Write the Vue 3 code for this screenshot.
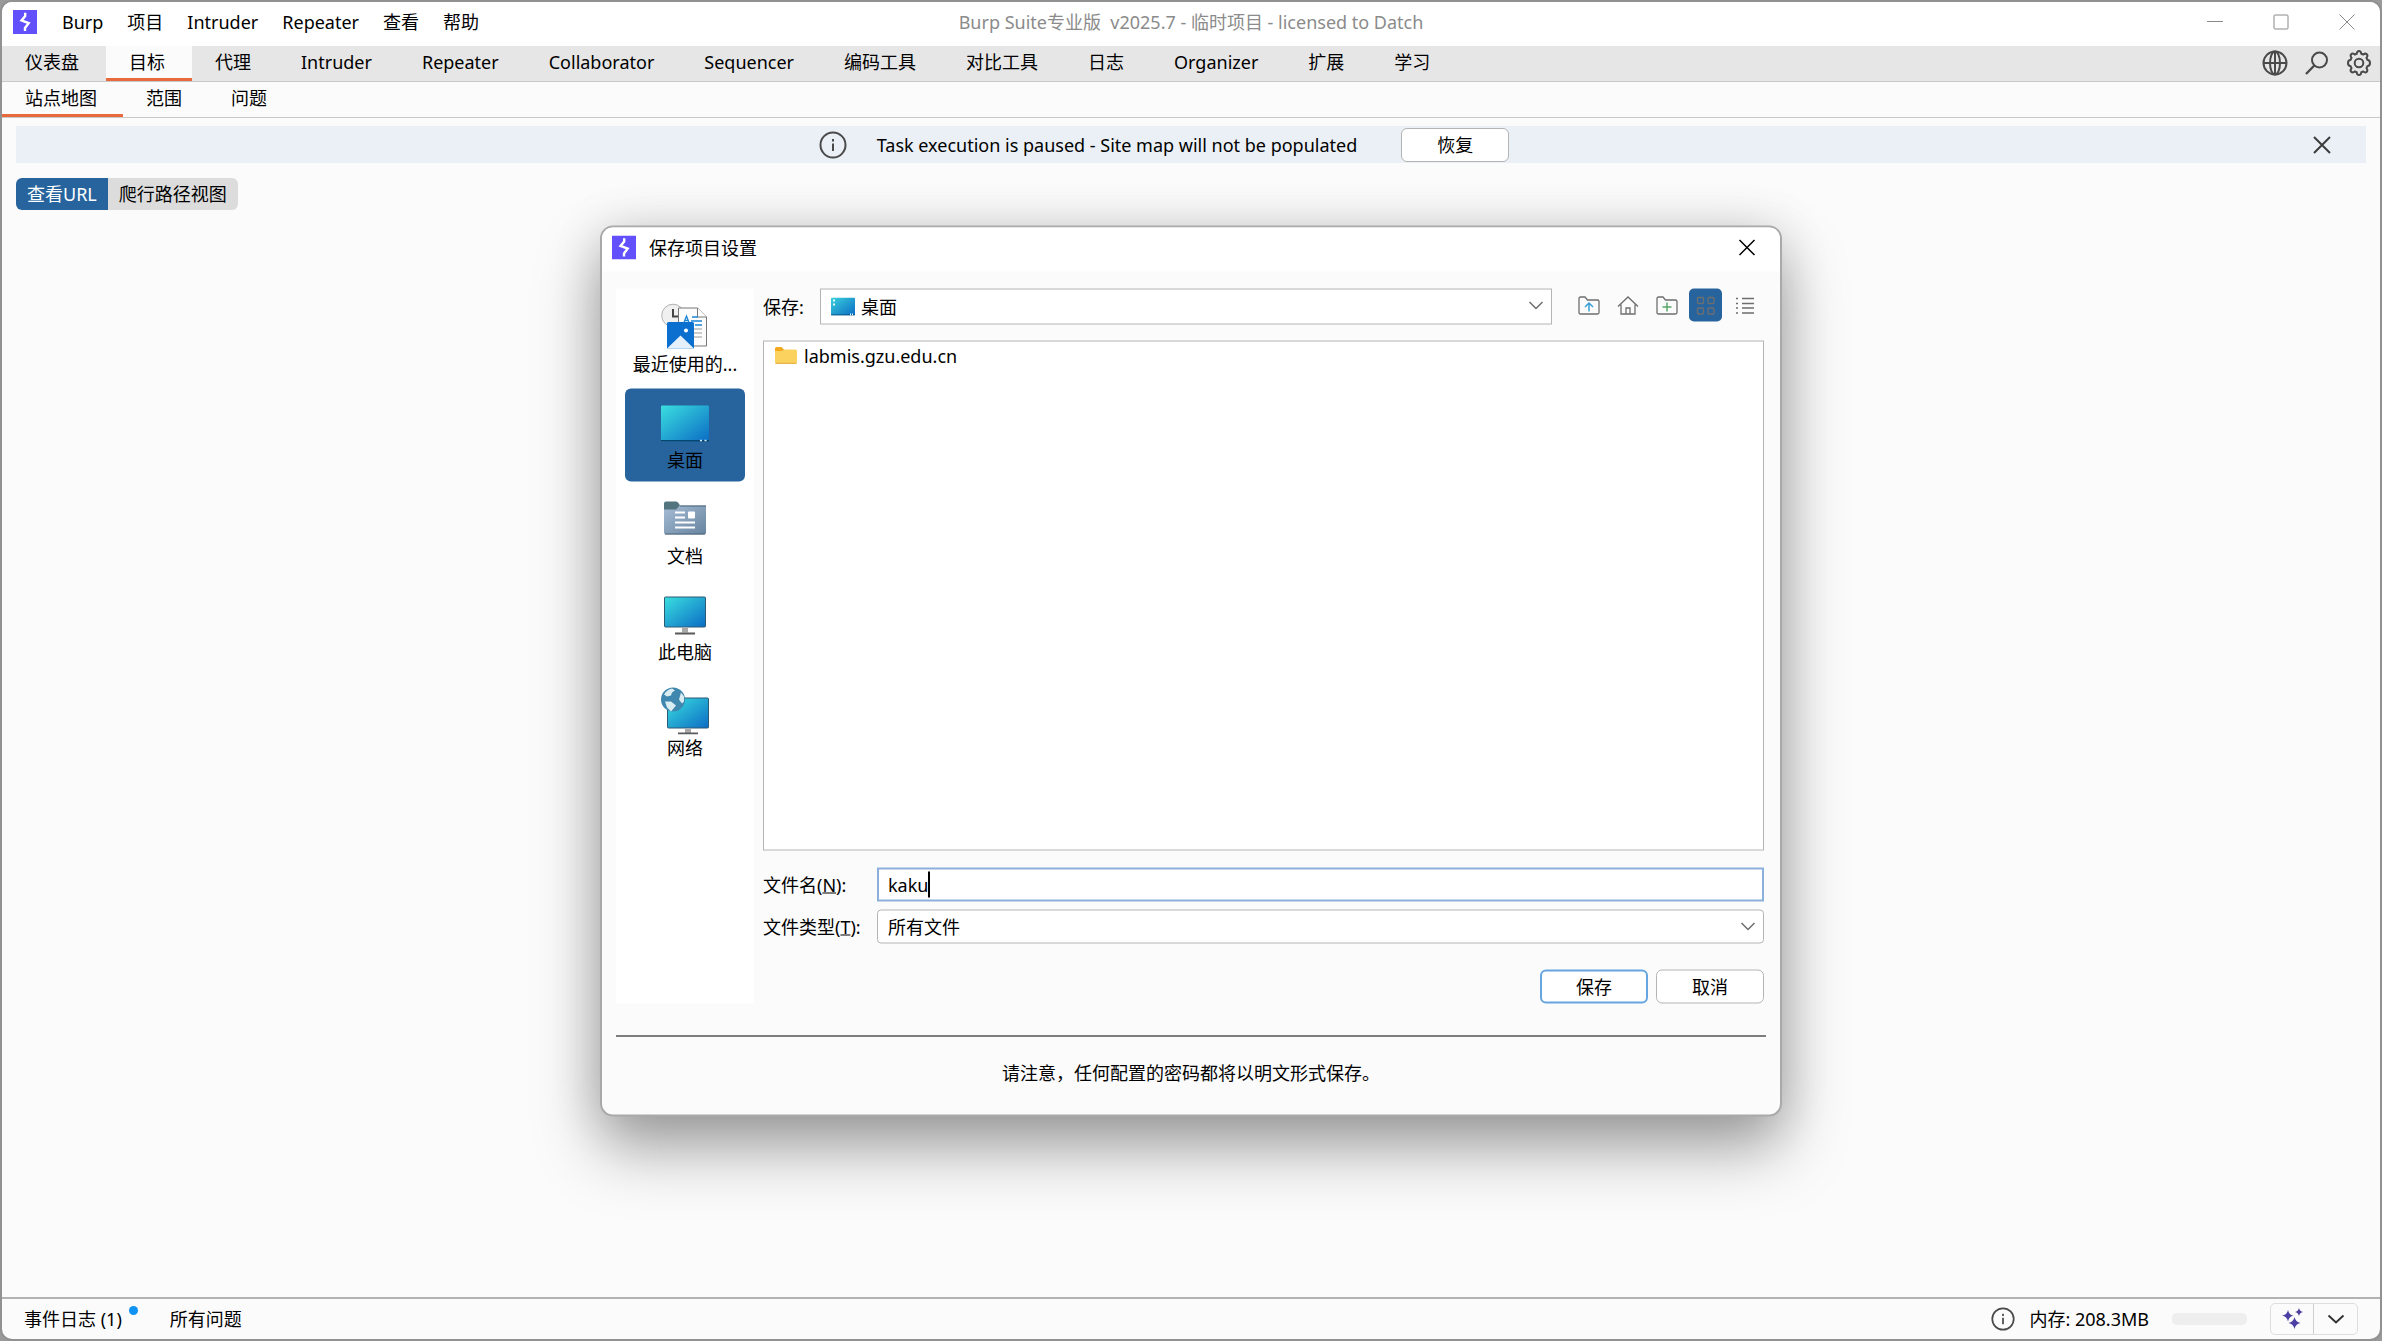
<script setup>
import { ref } from 'vue'

const menus = ['Burp', '项目', 'Intruder', 'Repeater', '查看', '帮助']
const tabs = ['仪表盘', '目标', '代理', 'Intruder', 'Repeater', 'Collaborator', 'Sequencer', '编码工具', '对比工具', '日志', 'Organizer', '扩展', '学习']
const activeTab = ref('目标')
const subTabs = ['站点地图', '范围', '问题']
const activeSubTab = ref('站点地图')
const places = [
  { id: 'recent', label: '最近使用的...' },
  { id: 'desktop', label: '桌面' },
  { id: 'documents', label: '文档' },
  { id: 'computer', label: '此电脑' },
  { id: 'network', label: '网络' },
]
const place = ref('desktop')
const files = ['labmis.gzu.edu.cn']
const fileName = ref('kaku')
</script>

<template>
  <div class="desktop">
    <div class="window">
      <header class="titlebar">
        <div class="side">
          <svg class="logo" viewBox="0 0 24 24" aria-hidden="true">
            <rect width="24" height="24" fill="#6150fb" />
            <path d="M12.200 2.800V6L8.500 10.500l7.200 2.600L12 18v3" fill="none" stroke="#fff" stroke-width="2.400" />
          </svg>
          <nav class="menus">
            <button v-for="m in menus" :key="m" type="button">{{ m }}</button>
          </nav>
        </div>
        <h1 class="title">Burp Suite专业版&nbsp; v2025.7 - 临时项目 - licensed to Datch</h1>
        <div class="side controls">
          <button type="button" aria-label="最小化"><svg viewBox="0 0 16 16"><path d="M0 7.500h16" /></svg></button>
          <button type="button" aria-label="最大化"><svg viewBox="0 0 16 16"><rect x="1" y="1" width="14" height="14" rx="1" /></svg></button>
          <button type="button" aria-label="关闭"><svg viewBox="0 0 16 16"><path d="M.5.5l15 15M15.500.5l-15 15" /></svg></button>
        </div>
      </header>

      <div class="tabbar main">
        <button v-for="t in tabs" :key="t" type="button" :class="{ active: t === activeTab }" @click="activeTab = t">{{ t }}</button>
        <div class="tools">
          <button type="button" aria-label="浏览器">
            <svg viewBox="0 0 26 26"><circle cx="13" cy="13" r="11.500" /><ellipse cx="13" cy="13" rx="5" ry="11.500" /><path d="M1.500 13h23M13 1.500v23" /></svg>
          </button>
          <button type="button" aria-label="搜索">
            <svg viewBox="0 0 26 26"><circle cx="15.500" cy="10" r="7.500" /><path d="M10.300 15.500L2 24" stroke-width="2.400" /></svg>
          </button>
          <button type="button" aria-label="设置">
            <svg viewBox="0 0 26 26"><path d="M10.700 3.700q.4-2.700 2.300-2.700t2.300 2.700l1.900.8q2.200-1.600 3.600-.3t-.3 3.600l.8 1.900q2.700.4 2.700 3.300t-2.700 3.300l-.8 1.900q1.600 2.200.3 3.600t-3.600-.3l-1.900.8q-.4 2.700-2.300 2.700t-2.300-2.700l-1.900-.8q-2.200 1.600-3.600.3t.3-3.600l-.8-1.900q-2.700-.4-2.700-3.300t2.700-3.300l.8-1.900q-1.600-2.200-.3-3.600t3.600.3z" /><circle cx="13" cy="13" r="4.300" /></svg>
          </button>
        </div>
      </div>

      <div class="tabbar sub">
        <button v-for="t in subTabs" :key="t" type="button" :class="{ active: t === activeSubTab }" @click="activeSubTab = t">{{ t }}</button>
      </div>

      <main class="content">
        <div class="banner">
          <div class="notice">
            <svg class="info" viewBox="0 0 28 28" aria-hidden="true"><circle cx="14" cy="14" r="12.500" /><path d="M14 12.500v7.500M14 8v2.500" /></svg>
            <span>Task execution is paused - Site map will not be populated</span>
            <button type="button" class="btn">恢复</button>
          </div>
          <button type="button" class="dismiss" aria-label="关闭提示"><svg viewBox="0 0 20 20"><path d="M2 2l16 16M18 2L2 18" /></svg></button>
        </div>
        <div class="views">
          <button type="button" class="on">查看URL</button>
          <button type="button">爬行路径视图</button>
        </div>
      </main>

      <footer class="status">
        <button type="button" class="log">事件日志 (1)<i class="dot"></i></button>
        <button type="button">所有问题</button>
        <div class="memory">
          <svg class="info" viewBox="0 0 28 28" aria-hidden="true"><circle cx="14" cy="14" r="12.500" /><path d="M14 12.500v7.500M14 8v2.500" /></svg>
          <span>内存: 208.3MB</span>
          <div class="meter"></div>
          <div class="split">
            <button type="button" aria-label="AI">
              <svg viewBox="0 0 24 24"><path d="M8 3q1 5 5.500 5.500Q9 9.500 8 14.500 7 9.500 2 8.500 7 8 8 3zM19 1q.8 3.400 4 4-3.200.6-4 4-.8-3.400-4-4 3.200-.6 4-4zM14.500 10q1 5 6 6-5 1-6 6-1-5-6-6 5-1 6-6z" fill="#4b3fa3" /></svg>
            </button>
            <button type="button" aria-label="展开"><svg viewBox="0 0 24 24"><path d="M4.500 8.500l7.500 7 7.500-7" fill="none" stroke="#333" stroke-width="2" /></svg></button>
          </div>
        </div>
      </footer>
    </div>

    <section class="dialog" role="dialog" aria-labelledby="dlg-title">
      <header class="dlg-head">
        <svg class="logo" viewBox="0 0 24 24" aria-hidden="true">
          <rect width="24" height="24" fill="#6150fb" />
          <path d="M12.200 2.800V6L8.500 10.500l7.200 2.600L12 18v3" fill="none" stroke="#fff" stroke-width="2.400" />
        </svg>
        <h2 id="dlg-title">保存项目设置</h2>
        <button type="button" aria-label="关闭"><svg viewBox="0 0 18 18"><path d="M1.500 1.500l15 15M16.500 1.500l-15 15" /></svg></button>
      </header>

      <div class="dlg-body">
        <nav class="places">
          <button v-for="p in places" :key="p.id" type="button" :class="{ on: p.id === place }" @click="place = p.id">
            <svg viewBox="0 0 48 48" aria-hidden="true">
              <defs>
                <linearGradient :id="'scr-' + p.id" x1="0" y1="0" x2="1" y2="1"><stop offset="0" stop-color="#3adfe0" /><stop offset="1" stop-color="#0b6cc4" /></linearGradient>
                <linearGradient :id="'aux-' + p.id" x1="0" y1="0" x2="1" y2="1"><stop offset="0" stop-color="#a6bdd5" /><stop offset="1" stop-color="#67839f" /></linearGradient>
              </defs>
              <template v-if="p.id === 'recent'">
                <circle cx="12" cy="13" r="11.300" fill="#f0f0f0" stroke="#b0b0b0" />
                <path d="M12 6.500v7.500h6" fill="none" stroke="#444" stroke-width="2" />
                <path d="M17.500 5.500h19l9 9v29h-28z" fill="#fcfcfc" stroke="#777" />
                <path d="M36.500 5.500v9h9" fill="#fff" stroke="#777" />
                <path d="M23 20l2.500-6.500 2.500 6.500M24 18h3M31 14.500h6M30 18.500h11M34 22.500h7" fill="none" stroke="#1a84d6" stroke-width="1.300" />
                <path d="M33 26.500h8M33 30.500h8M33 34.500h8" stroke="#999" />
                <path d="M6 21q0-1.500 1.500-1.500h24q1.500 0 1.500 1.500v25H6z" fill="#0a6fce" />
                <path d="M6 46l13.500-13L33 46z" fill="#e4f1fd" />
                <circle cx="25" cy="28" r="2" fill="#fff" />
              </template>
              <template v-else-if="p.id === 'desktop'">
                <rect y="7" width="48" height="36" rx="1" fill="url(#scr-desktop)" />
                <path d="M0 41.500h48v1.500H0z" fill="#08466f" />
                <path d="M39 42h2M43.500 42h2" stroke="#d9efff" stroke-width="1.500" />
              </template>
              <template v-else-if="p.id === 'documents'">
                <path d="M3 9q0-2 2-2h10q2 0 4 4l-3 5H3z" fill="#52757f" />
                <path d="M3 15h12l4-4h26v27q0 2-2 2H5q-2 0-2-2z" fill="url(#aux-documents)" />
                <path d="M19 11.500h26M4 39.500h40" stroke="#4b6479" />
                <path d="M14 18h10M14 23h10M14 28h20M14 33h20" stroke="#fff" stroke-width="2" />
                <rect x="27" y="17" width="7" height="7" rx="1" fill="#fff" />
              </template>
              <template v-else-if="p.id === 'computer'">
                <rect x="3.500" y="6.500" width="41" height="30" rx="1" fill="url(#scr-computer)" stroke="#2d5b72" />
                <path d="M21 37h6v5h-6z" fill="#a9a9a9" /><path d="M14 42h20v2H14z" fill="#595959" />
              </template>
              <template v-else>
                <rect x="6.500" y="11.500" width="41" height="30" rx="1" fill="url(#scr-network)" stroke="#2d5b72" />
                <path d="M24 42h6v5h-6z" fill="#a9a9a9" /><path d="M17 46h20v2H17z" fill="#595959" />
                <circle cx="12" cy="13" r="12" fill="#3f87ae" />
                <path d="M3 8q3-5 8-6l3 2-3 2-1 3-4 1zM4 15l6 0 5 4-5 6-4-4zM20 6l3 4v5l-2 2-3-4z" fill="#d8ecf2" />
              </template>
            </svg>
            <span>{{ p.label }}</span>
          </button>
        </nav>

        <form class="chooser" @submit.prevent>
          <div class="lookin">
            <label for="lookin">保存:</label>
            <div class="combo square">
              <svg class="combo-icon" viewBox="0 0 24 18" aria-hidden="true">
                <defs><linearGradient id="scr-small" x1="0" y1="0" x2="1" y2="1"><stop offset="0" stop-color="#3ad0dc" /><stop offset="1" stop-color="#0b6cc4" /></linearGradient></defs>
                <rect width="24" height="18" rx="1" fill="url(#scr-small)" /><path d="M0 17.500h24" stroke="#08466f" />
                <path d="M3 2v2M3 6v2M19 17h1M21 17h1" stroke="#e4fbff" stroke-width="2" />
              </svg>
              <select id="lookin" class="with-icon"><option>桌面</option></select>
              <svg class="chev" viewBox="0 0 16 10" aria-hidden="true"><path d="M1.500 1.500L8 8l6.500-6.500" /></svg>
            </div>
            <div class="nav-tools">
              <button type="button" aria-label="向上一级"><svg viewBox="0 0 24 24"><path d="M2 19V5q0-1.500 1.500-1.500H8l2.500 3h10Q22 6.500 22 8v11q0 1.500-1.500 1.500h-17Q2 20.500 2 19z" /><path d="M12 18V10M8 13.500l4-4 4 4" stroke="#389fd6" stroke-width="1.500" /></svg></button>
              <button type="button" aria-label="主目录"><svg viewBox="0 0 24 24"><path d="M2 13L12 3.500 22 13M5 11v9.500h14V11M10 20.500v-6h4v6" /></svg></button>
              <button type="button" aria-label="新建文件夹"><svg viewBox="0 0 24 24"><path d="M2 19V5q0-1.500 1.500-1.500H8l2.500 3h10Q22 6.500 22 8v11q0 1.500-1.500 1.500h-17Q2 20.500 2 19z" /><path d="M12 9v9M7.500 13.500h9" stroke="#59a869" stroke-width="1.500" /></svg></button>
              <button type="button" class="on" aria-label="列表视图"><svg viewBox="0 0 24 24"><rect x="3.500" y="4" width="6" height="6" rx="1" /><rect x="14" y="4" width="6" height="6" rx="1" /><rect x="3.500" y="14.500" width="6" height="6" rx="1" /><rect x="14" y="14.500" width="6" height="6" rx="1" /></svg></button>
              <button type="button" aria-label="详细信息"><svg viewBox="0 0 24 24"><path d="M3 5h2M9 5h12M3 10h2M9 10h12M3 14.500h2M9 14.500h12M3 19.500h2M9 19.500h12" /></svg></button>
            </div>
          </div>

          <ul class="files">
            <li v-for="f in files" :key="f">
              <svg viewBox="0 0 24 20" aria-hidden="true"><path d="M1 3q0-1.500 1.500-1.500h5L10 4l-2 3H1z" fill="#f3a81d" /><path d="M1 5.500h7L10 4h11.500Q23 4 23 5.500v11q0 1.500-1.500 1.500h-19Q1 18 1 16.500z" fill="#fcd25f" /><path d="M1.500 17.800h21" stroke="#e0a832" /></svg>
              <span>{{ f }}</span>
            </li>
          </ul>

          <div class="field">
            <label for="fname">文件名(<u>N</u>):</label>
            <div class="textbox"><input id="fname" v-model="fileName" type="text" spellcheck="false" autocomplete="off"><i class="caret"></i></div>
          </div>
          <div class="field">
            <label for="ftype">文件类型(<u>T</u>):</label>
            <div class="combo">
              <select id="ftype"><option>所有文件</option></select>
              <svg class="chev" viewBox="0 0 16 10" aria-hidden="true"><path d="M1.500 1.500L8 8l6.500-6.500" /></svg>
            </div>
          </div>
          <div class="actions">
            <button type="submit" class="btn primary">保存</button>
            <button type="button" class="btn">取消</button>
          </div>
        </form>
      </div>

      <p class="note">请注意，任何配置的密码都将以明文形式保存。</p>
    </section>
  </div>
</template>

<style>
body {
  margin: 0;
  background: #9a9a9a;
}
</style>

<style scoped>
.desktop {
  position: relative;
  display: flex;
  min-height: 100vh;
  font: 18px/26px "Noto Sans", "Noto Sans CJK SC", sans-serif;
  color: #000;
}
* {
  box-sizing: border-box;
}
button,
input,
select {
  margin: 0;
  padding: 0;
  border: 0;
  background: none;
  font: inherit;
  color: inherit;
}
svg {
  display: block;
  flex: none;
}
.window {
  flex: 1;
  min-width: 0;
  display: flex;
  flex-direction: column;
  border: 2px solid #919191;
  border-radius: 12px;
  overflow: hidden;
  background: #fbfbfb;
}
.logo {
  width: 24px;
  height: 24px;
}
.titlebar {
  display: flex;
  align-items: center;
  height: 44px;
  padding-bottom: 4px;
  background: #fff;
}
.side {
  flex: 1;
  display: flex;
  align-items: center;
  padding-left: 11px;
}
.menus {
  display: flex;
  padding-left: 13px;
}
.menus button {
  padding: 0 12px;
}
.title {
  margin: 0;
  font: inherit;
  color: #8b8b8b;
}
.controls {
  justify-content: flex-end;
}
.controls button {
  display: grid;
  place-items: center;
  width: 66px;
  height: 40px;
}
.controls svg {
  width: 16px;
  height: 16px;
  fill: none;
  stroke: #8a8a8a;
}
.tabbar {
  display: flex;
  height: 36px;
  border-bottom: 1px solid #c8c8c8;
}
.tabbar > button {
  padding: 0 27px 0 23px;
  border-bottom: 3px solid transparent;
}
.tabbar.sub > button {
  padding-right: 26px;
}
.tabbar > button.active {
  border-bottom-color: #e8693b;
  background: #fbfbfb;
}
.tabbar.main {
  background: #e6e6e6;
}
.tools {
  display: flex;
  align-items: center;
  gap: 16px;
  margin-left: auto;
  padding: 0 8px 2px 0;
}
.tools svg {
  width: 26px;
  height: 26px;
  fill: none;
  stroke: #4a4a4a;
  stroke-width: 2;
}
.content {
  flex: 1;
  display: flex;
  flex-direction: column;
  align-items: flex-start;
  gap: 15px;
  padding: 8px 14px;
}
.banner {
  display: flex;
  align-items: center;
  align-self: stretch;
  height: 37px;
  padding-right: 34px;
  background: #ebf0f6;
}
.notice {
  flex: 1;
  display: flex;
  align-items: center;
  justify-content: center;
  gap: 30px;
}
.notice .btn {
  margin-left: 14px;
}
.info {
  width: 28px;
  height: 28px;
  fill: none;
  stroke: #4a4a4a;
  stroke-width: 2;
}
.btn {
  width: 108px;
  height: 34px;
  border: 1px solid #b4b4b4;
  border-radius: 6px;
  background: #fff;
}
.btn.primary {
  border: 2px solid #66a5e0;
}
.dismiss svg {
  width: 20px;
  height: 20px;
  stroke: #3c3c3c;
  stroke-width: 2;
}
.views {
  display: flex;
  border-radius: 6px;
  overflow: hidden;
}
.views button {
  height: 32px;
  padding: 0 11px;
  background: #dcdcdc;
}
.views .on {
  background: #27649d;
  color: #fff;
}
.status {
  display: flex;
  align-items: center;
  height: 42px;
  padding: 0 22px;
  border-top: 2px solid #b2b2b2;
  gap: 32px;
}
.log {
  display: flex;
  gap: 7px;
}
.dot {
  width: 9px;
  height: 9px;
  border-radius: 50%;
  background: #0f93f5;
}
.memory {
  display: flex;
  align-items: center;
  gap: 14px;
  margin-left: auto;
}
.memory .info {
  width: 24px;
  height: 24px;
}
.meter {
  width: 75px;
  height: 12px;
  margin: 0 9px;
  border-radius: 5px;
  background: #eee;
}
.split {
  display: flex;
  border: 1px solid #dedede;
  border-radius: 5px;
}
.split button {
  display: grid;
  place-items: center;
  width: 43px;
  height: 30px;
}
.split button:first-child {
  border-right: 1px solid #cfcfcf;
}
.split svg {
  width: 24px;
  height: 24px;
}
.dialog {
  position: absolute;
  left: 50%;
  top: 50%;
  display: flex;
  flex-direction: column;
  width: 1182px;
  max-width: 96vw;
  translate: -50% -50%;
  border: 2px solid #a9a9a9;
  border-radius: 13px;
  background: #fbfbfb;
  box-shadow: 0 32px 64px rgba(0, 0, 0, 0.34), 0 4px 50px rgba(0, 0, 0, 0.14);
}
.dlg-head {
  display: flex;
  align-items: center;
  height: 44px;
  padding: 0 10px 4px;
  border-radius: 11px 11px 0 0;
  background: #fff;
}
.dlg-head h2 {
  margin: 0 auto 0 13px;
  font: inherit;
}
.dlg-head button {
  padding: 0 14px;
}
.dlg-head svg:not(.logo) {
  width: 18px;
  height: 18px;
  stroke: #000;
  stroke-width: 1.500;
}
.dlg-body {
  display: flex;
  gap: 9px;
  margin: 0 14px;
  padding: 17px 2px 32px 0;
  border-bottom: 1px solid #000;
}
.places {
  flex: none;
  display: flex;
  flex-direction: column;
  gap: 3px;
  width: 138px;
  padding: 4px 9px;
  background: #fff;
}
.places button {
  display: flex;
  flex-direction: column;
  align-items: center;
  height: 93px;
  padding-top: 10px;
  border-radius: 6px;
}
.places .on {
  background: #27649d;
}
.places svg {
  width: 48px;
  height: 48px;
}
.chooser {
  flex: 1;
  min-width: 0;
  display: flex;
  flex-direction: column;
}
.lookin {
  display: flex;
  align-items: center;
  margin-bottom: 16px;
}
.lookin label {
  width: 57px;
}
.combo {
  position: relative;
  flex: 1;
  display: flex;
  height: 34px;
}
.combo.square {
  height: 36px;
}
.combo select {
  appearance: none;
  flex: 1;
  padding: 0 36px 0 10px;
  border: 1px solid #b4b4b4;
  border-radius: 4px;
  background: #fff;
}
.combo.square select {
  border-radius: 0;
}
.combo select.with-icon {
  padding-left: 40px;
}
.combo-icon {
  position: absolute;
  left: 11px;
  top: 9px;
  width: 24px;
  height: 18px;
}
.chev {
  position: absolute;
  right: 8px;
  top: 12px;
  width: 16px;
  height: 10px;
  fill: none;
  stroke: #6e6e6e;
  stroke-width: 1.500;
  pointer-events: none;
}
.nav-tools {
  display: flex;
  gap: 6px;
  padding: 0 3px 2px 20px;
}
.nav-tools button {
  display: grid;
  place-items: center;
  width: 33px;
  height: 33px;
  border-radius: 5px;
}
.nav-tools svg {
  width: 24px;
  height: 24px;
  fill: none;
  stroke: #6e6e6e;
  stroke-width: 1.300;
}
.nav-tools .on {
  background: #27649d;
}
.files {
  height: 510px;
  margin: 0 0 17px;
  padding: 1px 10px;
  border: 1px solid #b4b4b4;
  background: #fff;
  list-style: none;
}
.files li {
  display: flex;
  align-items: center;
  gap: 6px;
}
.files svg {
  width: 24px;
  height: 20px;
}
.field {
  display: flex;
  align-items: center;
  margin-bottom: 8px;
}
.field label {
  width: 114px;
}
.textbox {
  flex: 1;
  display: flex;
  align-items: center;
  height: 34px;
  padding-left: 9px;
  border: 2px solid #8cb0db;
  background: #fff;
}
.textbox input {
  field-sizing: content;
  outline: none;
}
.caret {
  width: 2px;
  height: 26px;
  background: #000;
}
.actions {
  display: flex;
  justify-content: flex-end;
  gap: 8px;
  margin-top: 18px;
}
.note {
  margin: 0;
  padding: 23px 0 29px;
  text-align: center;
}
</style>
